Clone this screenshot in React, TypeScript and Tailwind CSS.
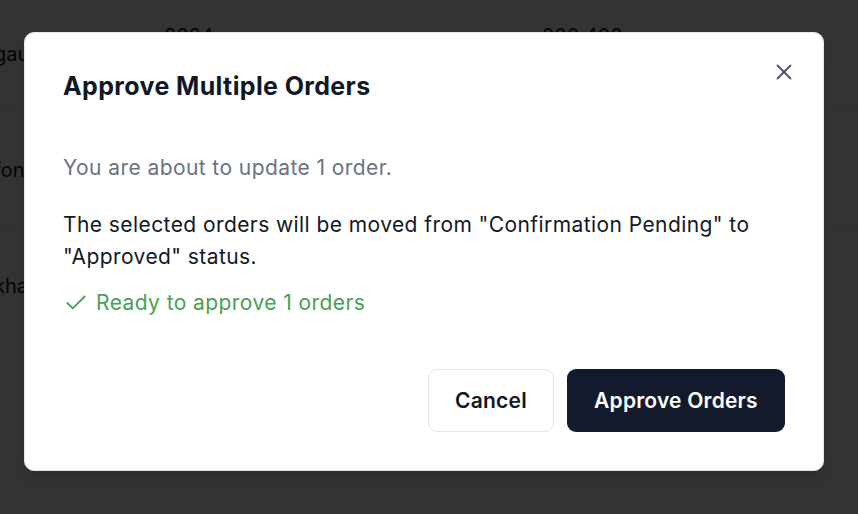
import { Check, X } from 'lucide-react'

const rows = [
  { name: 'gaurav Traders', date: '2024', amount: '200,400' },
  { name: 'fonix Pvt Ltd', date: '2024', amount: '150,000' },
  { name: 'khanna Foods', date: '2024', amount: '98,200' },
]

function BackgroundTable() {
  return (
    <div className="w-full h-full bg-white overflow-hidden -mt-[4px]">
      {rows.map((row, i) => (
        <div
          key={i}
          className={`h-[116px] flex items-center text-[20px] text-gray-900 ${i < rows.length - 1 ? 'border-b border-gray-200' : ''}`}
        >
          <div className="w-[170px] -ml-[6px]">{row.name}</div>
          <div className="w-[378px] -mt-[36px]">{row.date}</div>
          <div className="-mt-[36px]">{row.amount}</div>
        </div>
      ))}
    </div>
  )
}

export default function App() {
  return (
    <div
      className="relative w-[858px] h-[514px] overflow-hidden"
      style={{ fontFamily: 'Inter, "Noto Sans", "Liberation Sans", sans-serif' }}
    >
      <BackgroundTable />

      <div className="absolute inset-0 bg-black/80" />

      <div className="absolute left-[24px] top-[32px] w-[800px] bg-white rounded-[10px] border border-gray-200 shadow-lg pl-[38px] pr-[38px] pt-[37px] pb-[38px]">
        <button className="absolute right-[26px] top-[26px] text-gray-600">
          <X size={26} strokeWidth={1.7} />
        </button>

        <h2 className="text-[25px] leading-8 font-bold tracking-[0.015em] text-gray-900">
          Approve Multiple Orders
        </h2>

        <p className="mt-[52px] text-[21px] leading-7 tracking-[0.02em] text-gray-500">
          You are about to update 1 order.
        </p>

        <p className="mt-[27px] text-[21px] leading-8 tracking-[0.02em] text-gray-900">
          The selected orders will be moved from "Confirmation Pending" to "Approved" status.
        </p>

        <div className="mt-[16px] flex items-center gap-[7px] text-[21px] leading-7 tracking-[0.02em] text-[#47a152]">
          <Check size={26} strokeWidth={1.7} />
          <span>Ready to approve 1 orders</span>
        </div>

        <div className="mt-[52px] flex justify-end gap-[13px]">
          <button className="h-[63px] w-[126px] rounded-[9px] border border-gray-200 bg-white text-[21px] font-semibold tracking-[0.01em] text-gray-900">
            Cancel
          </button>
          <button className="h-[63px] w-[218px] rounded-[9px] bg-[#131a2c] text-[21px] font-semibold tracking-[0.01em] text-white">
            Approve Orders
          </button>
        </div>
      </div>
    </div>
  )
}
